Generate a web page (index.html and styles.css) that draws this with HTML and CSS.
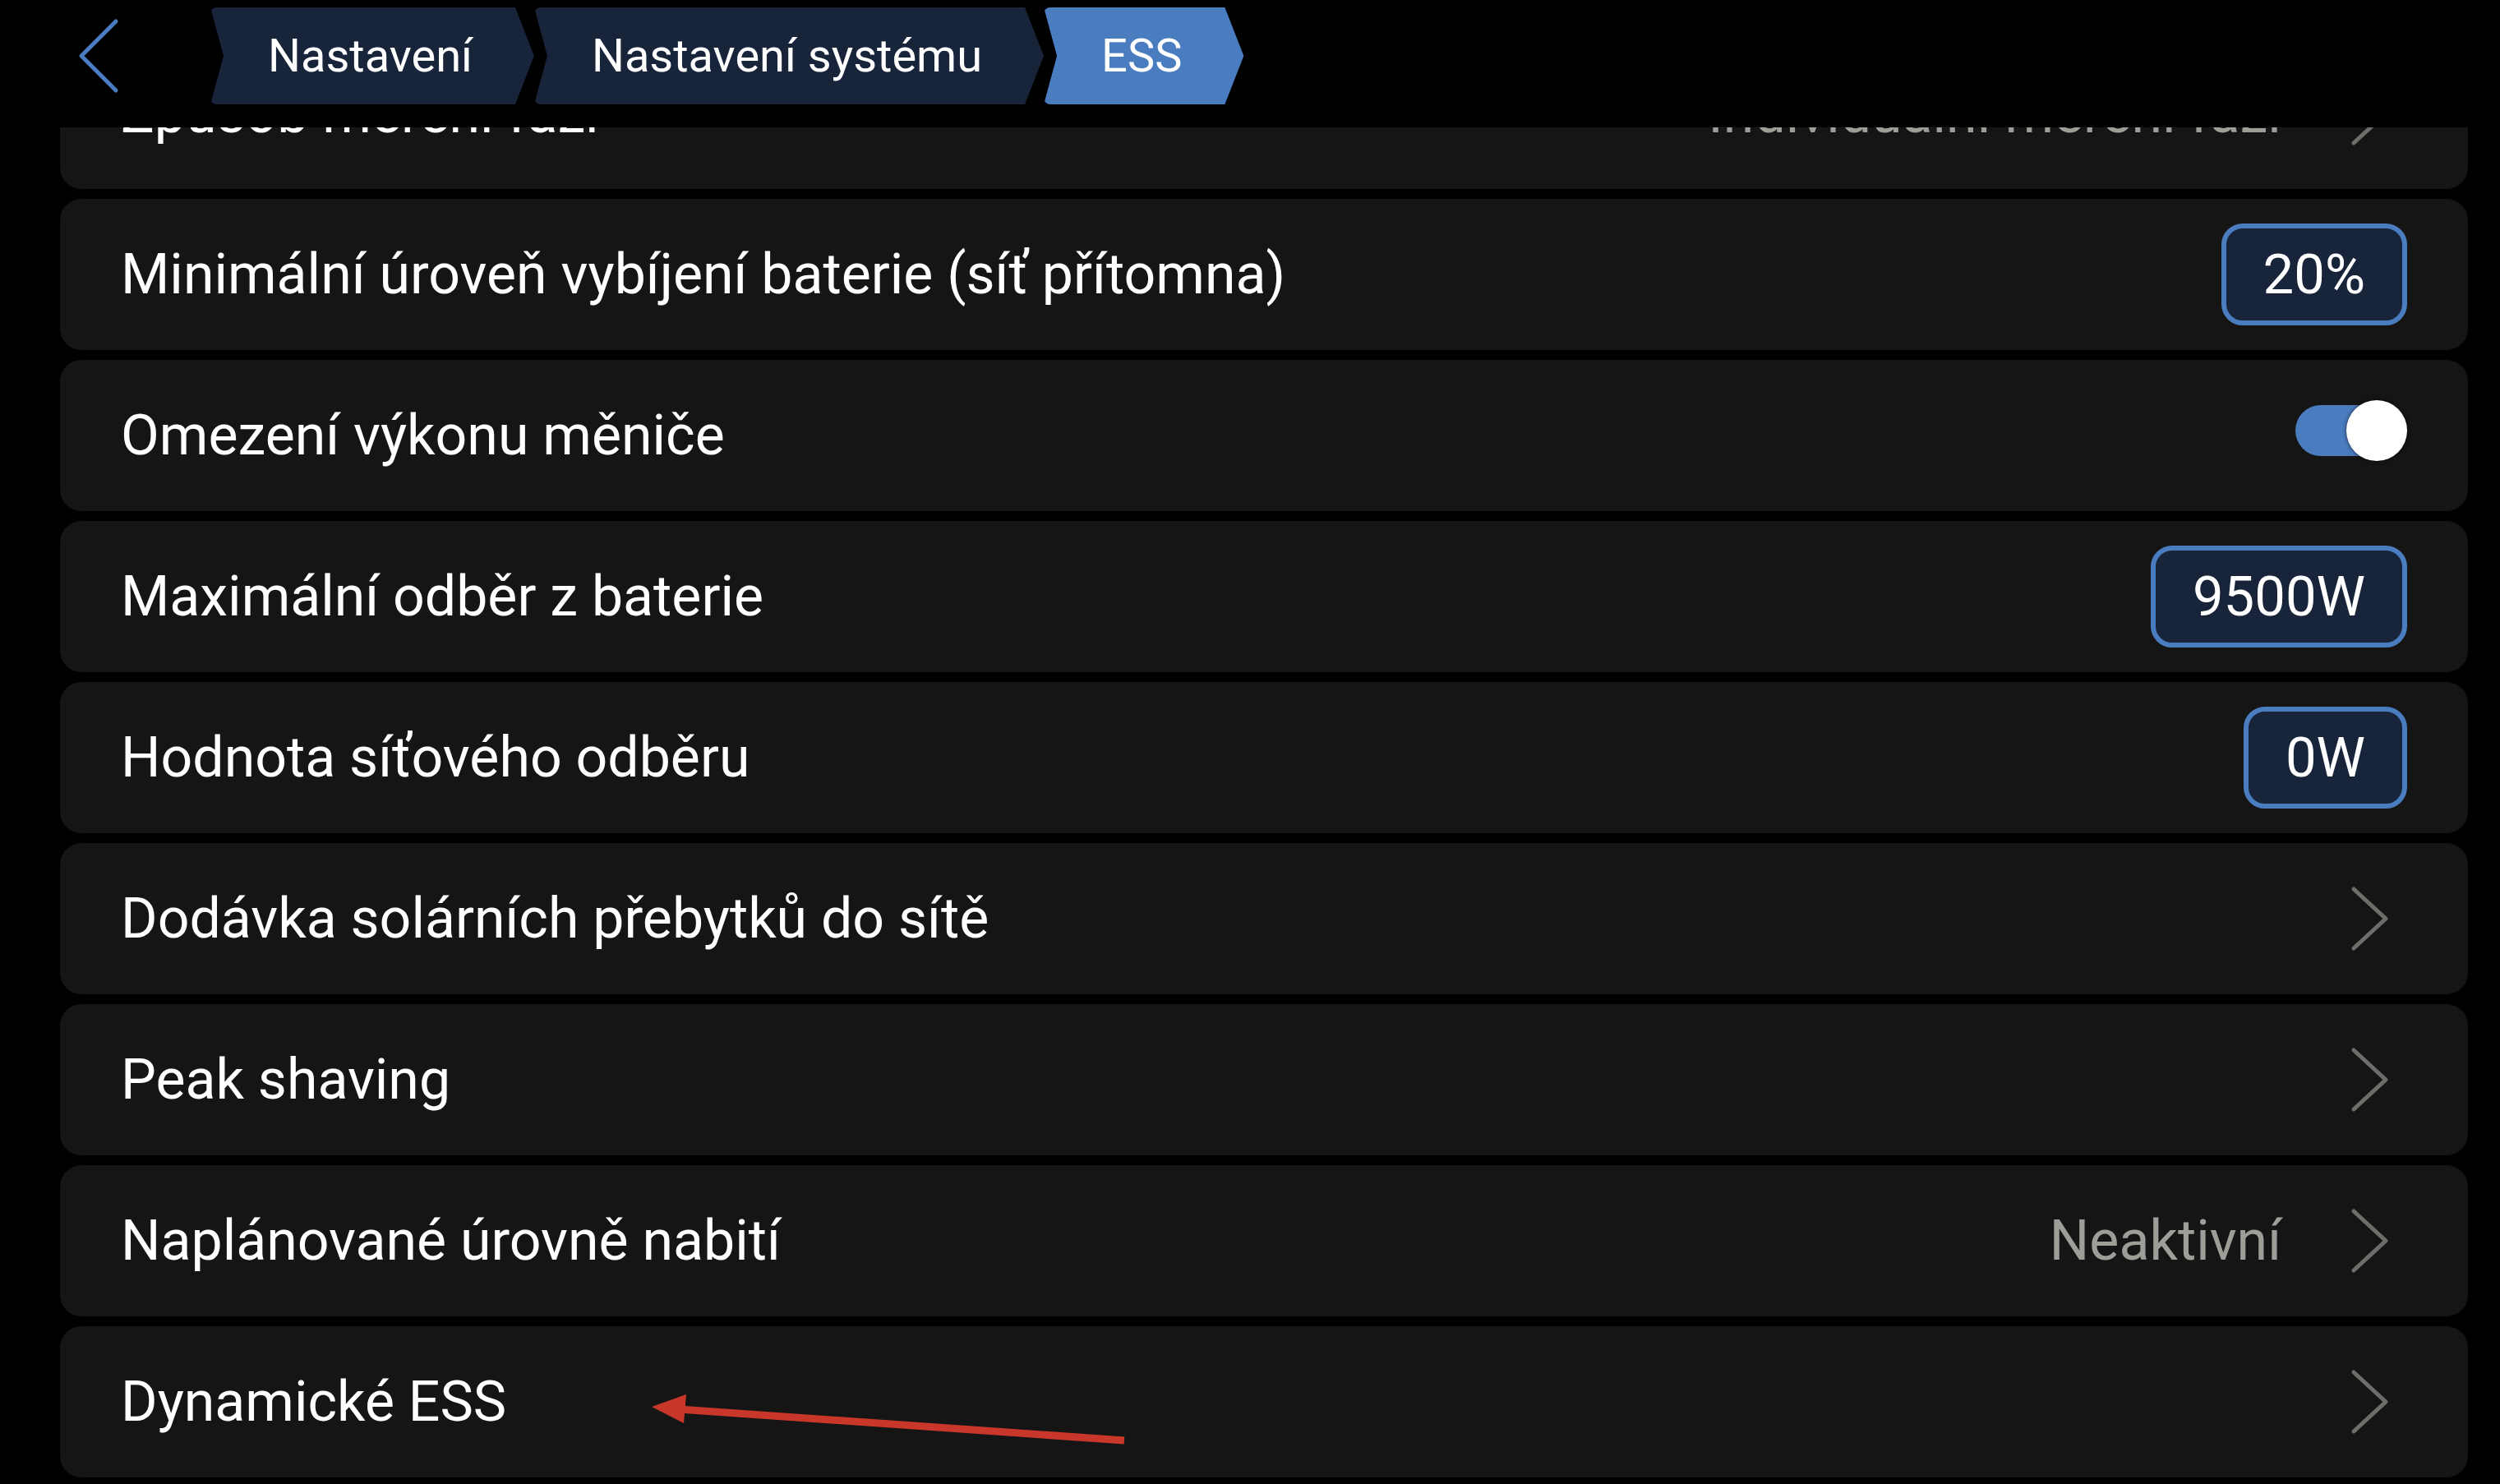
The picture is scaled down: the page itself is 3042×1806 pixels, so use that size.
FILE: index.html
```html
<!DOCTYPE html>
<html lang="cs">
<head>
<meta charset="utf-8">
<title>ESS</title>
<link rel="stylesheet" href="styles.css">
</head>
<body>
<div class="screen">
  <header class="topbar">
    <svg class="back" viewBox="0 0 60 118" width="60" height="118">
      <path d="M51 17 L9 59 L51 101" fill="none" stroke="#4a7cc0" stroke-width="5" stroke-linecap="round" stroke-linejoin="round"/>
    </svg>
    <nav class="crumbs">
      <div class="crumb">Nastavení</div>
      <div class="crumb">Nastavení systému</div>
      <div class="crumb active">ESS</div>
    </nav>
  </header>
  <main class="viewport">
    <div class="list">
      <div class="card">
        <span class="label">Způsob měření fází</span>
        <div class="right">
          <span class="secondary">Individuální měření fází</span>
          <svg class="chev" viewBox="0 0 70 80" width="70" height="80"><path d="M5 4 L44 40 L5 76" fill="none" stroke="#6d6d69" stroke-width="5" stroke-linecap="round" stroke-linejoin="round"/></svg>
        </div>
      </div>
      <div class="card">
        <span class="label">Minimální úroveň vybíjení baterie (síť přítomna)</span>
        <div class="right"><span class="valbox">20%</span></div>
      </div>
      <div class="card">
        <span class="label">Omezení výkonu měniče</span>
        <div class="right">
          <div class="toggle"><span class="track"></span><span class="knob"></span></div>
        </div>
      </div>
      <div class="card">
        <span class="label">Maximální odběr z baterie</span>
        <div class="right"><span class="valbox">9500W</span></div>
      </div>
      <div class="card">
        <span class="label">Hodnota síťového odběru</span>
        <div class="right"><span class="valbox">0W</span></div>
      </div>
      <div class="card">
        <span class="label">Dodávka solárních přebytků do sítě</span>
        <div class="right">
          <svg class="chev" viewBox="0 0 70 80" width="70" height="80"><path d="M5 4 L44 40 L5 76" fill="none" stroke="#6d6d69" stroke-width="5" stroke-linecap="round" stroke-linejoin="round"/></svg>
        </div>
      </div>
      <div class="card">
        <span class="label">Peak shaving</span>
        <div class="right">
          <svg class="chev" viewBox="0 0 70 80" width="70" height="80"><path d="M5 4 L44 40 L5 76" fill="none" stroke="#6d6d69" stroke-width="5" stroke-linecap="round" stroke-linejoin="round"/></svg>
        </div>
      </div>
      <div class="card">
        <span class="label">Naplánované úrovně nabití</span>
        <div class="right">
          <span class="secondary">Neaktivní</span>
          <svg class="chev" viewBox="0 0 70 80" width="70" height="80"><path d="M5 4 L44 40 L5 76" fill="none" stroke="#6d6d69" stroke-width="5" stroke-linecap="round" stroke-linejoin="round"/></svg>
        </div>
      </div>
      <div class="card">
        <span class="label">Dynamické ESS</span>
        <div class="right">
          <svg class="chev" viewBox="0 0 70 80" width="70" height="80"><path d="M5 4 L44 40 L5 76" fill="none" stroke="#6d6d69" stroke-width="5" stroke-linecap="round" stroke-linejoin="round"/></svg>
        </div>
      </div>
    </div>
  </main>
  <svg class="annotation" viewBox="0 0 3042 1806" width="3042" height="1806">
    <line x1="826" y1="1715" x2="1368" y2="1753" stroke="#c9372b" stroke-width="9"/>
    <polygon points="793,1712 835,1697 832,1732" fill="#c9372b"/>
  </svg>
</div>
</body>
</html>
```

FILE: styles.css
```css
html, body {
  margin: 0;
  padding: 0;
  background: #000;
}

body {
  font-family: Roboto, "Noto Sans", "Liberation Sans", sans-serif;
  color: #fff;
}

.screen {
  position: relative;
  width: 3042px;
  height: 1806px;
  overflow: hidden;
  background: #000;
}

.topbar {
  display: flex;
  align-items: flex-start;
  height: 155px;
  padding-left: 90px;
  box-sizing: border-box;
  background: #000;
}

.back {
  display: block;
  margin-top: 9px;
  flex: none;
}

.crumbs {
  display: flex;
  gap: 0;
  margin-top: 9px;
  margin-left: 106px;
}

.crumb {
  height: 118px;
  line-height: 118px;
  padding: 0 75px 0 70px;
  font-size: 56px;
  color: #fff;
  background: #17243a;
  white-space: nowrap;
  clip-path: polygon(0 0, calc(100% - 23px) 0, 100% 50%, calc(100% - 23px) 100%, 0 100%, 16px 50%);
  border-radius: 8px;
}

.crumb.active {
  background: #4a7cc0;
}

.viewport {
  height: 1651px;
  overflow: hidden;
}

.list {
  display: flex;
  flex-direction: column;
  gap: 12px;
  margin-top: -109px;
  padding: 0 39px 0 73px;
}

.card {
  display: flex;
  align-items: center;
  justify-content: space-between;
  height: 184px;
  padding: 0 74px;
  box-sizing: border-box;
  background: #151515;
  border-radius: 26px;
}

.label {
  font-size: 68px;
  color: #fff;
  white-space: nowrap;
}

.right {
  display: flex;
  align-items: center;
  gap: 83px;
}

.secondary {
  font-size: 68px;
  color: #9e9d98;
  white-space: nowrap;
}

.chev {
  display: block;
  flex: none;
}

.valbox {
  display: flex;
  align-items: center;
  justify-content: center;
  height: 124px;
  padding: 0 45px;
  box-sizing: border-box;
  border: 6px solid #4a7cc0;
  border-radius: 26px;
  background: #17243a;
  font-size: 67px;
  color: #fff;
}

.toggle {
  position: relative;
  width: 136px;
  height: 74px;
  margin-bottom: 12px;
}

.track {
  position: absolute;
  left: 0;
  top: 6px;
  width: 126px;
  height: 62px;
  border-radius: 31px;
  background: #4a7cc0;
}

.knob {
  position: absolute;
  right: 0;
  top: 0;
  width: 74px;
  height: 74px;
  border-radius: 50%;
  background: #fff;
  box-shadow: 0 0 5px rgba(0, 0, 0, 0.7);
}

.annotation {
  position: absolute;
  left: 0;
  top: 0;
  pointer-events: none;
}
```
